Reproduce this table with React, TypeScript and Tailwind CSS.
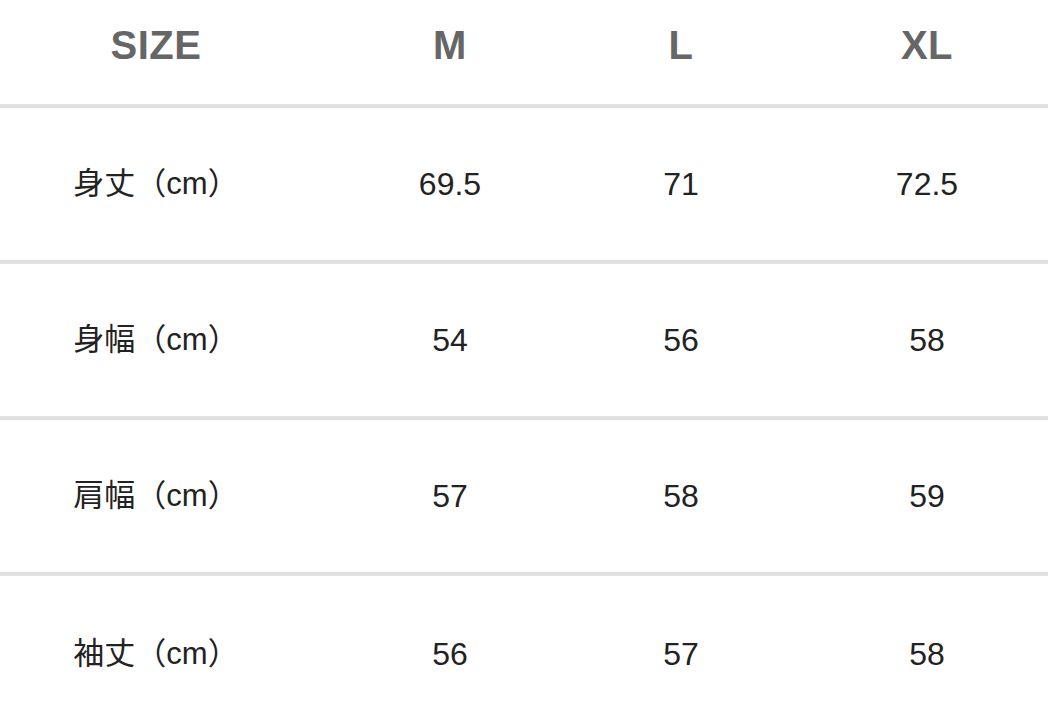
// Size chart table — header row + measurement rows
const sizes = ['M', 'L', 'XL'];

const rows: { label: string; values: string[] }[] = [
  { label: '身丈（cm）', values: ['69.5', '71', '72.5'] },
  { label: '身幅（cm）', values: ['54', '56', '58'] },
  { label: '肩幅（cm）', values: ['57', '58', '59'] },
  { label: '袖丈（cm）', values: ['56', '57', '58'] },
];

const cols = 'grid grid-cols-[312px_276px_186px_306px]';

export default function App() {
  return (
    <div className="h-[707px] w-[1048px] overflow-hidden bg-white font-['Liberation_Sans','Noto_Sans_CJK_JP',sans-serif]">
      <div className="w-[1080px]">
        {/* ── Header ─────────────────────────────────────── */}
        <div className={`${cols} h-[108px] border-b-4 border-[#e0e0e0] pb-[15px] text-[40px] font-bold tracking-[0.5px] text-[#666666]`}>
          <div className="flex items-center justify-center">SIZE</div>
          {sizes.map((s) => (
            <div key={s} className="flex items-center justify-center">
              {s}
            </div>
          ))}
        </div>

        {/* ── Rows ───────────────────────────────────────── */}
        {rows.map((row, i) => (
          <div
            key={row.label}
            className={`${cols} h-[156px] text-[32px] text-[#222222] ${i < rows.length - 1 ? 'border-b-4 border-[#e0e0e0]' : ''}`}
          >
            <div className="flex items-center justify-center text-[31px]">{row.label}</div>
            {row.values.map((v, j) => (
              <div key={j} className="flex items-center justify-center">
                {v}
              </div>
            ))}
          </div>
        ))}
      </div>
    </div>
  );
}
